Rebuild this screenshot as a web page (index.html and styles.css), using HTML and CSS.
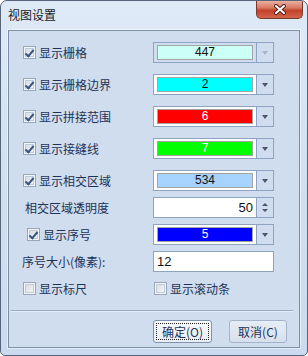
FILE: index.html
```html
<!DOCTYPE html>
<html lang="zh-CN">
<head>
  <meta charset="UTF-8">
  <title>视图设置</title>
  <link rel="stylesheet" href="styles.css">
</head>
<body>
  <div class="window">
    <div class="titlebar">
      <span class="title">视图设置</span>
      <div class="close">
        <svg width="14" height="11" viewBox="0 0 14 11">
          <path d="M3 2 L11 9 M11 2 L3 9" stroke="#5b231b" stroke-width="4" stroke-linecap="round"/>
          <path d="M3 2 L11 9 M11 2 L3 9" stroke="#fff" stroke-width="2" stroke-linecap="round"/>
        </svg>
      </div>
    </div>

    <div class="client">
      <div class="row">
        <label class="label"><span class="check on"></span>显示栅格</label>
        <div class="combo disabled">
          <div class="combo-val"><div class="swatch dark" style="background:#ccfff5">447</div></div>
          <div class="combo-btn"><span class="arrow"></span></div>
        </div>
      </div>
      <div class="row">
        <label class="label"><span class="check on"></span>显示栅格边界</label>
        <div class="combo">
          <div class="combo-val"><div class="swatch dark" style="background:#00ffff">2</div></div>
          <div class="combo-btn"><span class="arrow"></span></div>
        </div>
      </div>
      <div class="row">
        <label class="label"><span class="check on"></span>显示拼接范围</label>
        <div class="combo">
          <div class="combo-val"><div class="swatch" style="background:#ff0000">6</div></div>
          <div class="combo-btn"><span class="arrow"></span></div>
        </div>
      </div>
      <div class="row">
        <label class="label"><span class="check on"></span>显示接缝线</label>
        <div class="combo">
          <div class="combo-val"><div class="swatch" style="background:#00ff00">7</div></div>
          <div class="combo-btn"><span class="arrow"></span></div>
        </div>
      </div>
      <div class="row tight">
        <label class="label"><span class="check on"></span>显示相交区域</label>
        <div class="combo">
          <div class="combo-val"><div class="swatch dark" style="background:#a6d3ff">534</div></div>
          <div class="combo-btn"><span class="arrow"></span></div>
        </div>
      </div>
      <div class="row tight">
        <label class="label text-only">相交区域透明度</label>
        <div class="combo spin">
          <div class="spin-val">50</div>
          <div class="combo-btn spin-btn"><span class="arrow up"></span><span class="arrow"></span></div>
        </div>
      </div>
      <div class="row tight">
        <label class="label indent"><span class="check on"></span>显示序号</label>
        <div class="combo">
          <div class="combo-val"><div class="swatch" style="background:#0000ff">5</div></div>
          <div class="combo-btn"><span class="arrow"></span></div>
        </div>
      </div>
      <div class="row tight">
        <label class="label size-label">序号大小(像素):</label>
        <div class="textbox">12</div>
      </div>
      <div class="row">
        <label class="label wide"><span class="check"></span>显示标尺</label>
        <label class="label plain"><span class="check"></span>显示滚动条</label>
      </div>

      <div class="sep"></div>

      <div class="actions">
        <button class="btn default"><span class="focus">确定(O)</span></button>
        <button class="btn">取消(C)</button>
      </div>
    </div>
  </div>
</body>
</html>
```

FILE: styles.css
```css
body {
  margin: 0;
  font-family: "Noto Sans CJK SC", sans-serif;
  background: #fff;
}
.window {
  width: 308px;
  height: 356px;
  box-sizing: border-box;
  border: 1px solid #56657a;
  border-radius: 7px 7px 5px 5px;
  background: linear-gradient(#dfeaf7, #d3e1f1 40%, #cbdaee);
  overflow: hidden;
}
.titlebar {
  height: 29px;
  display: flex;
  justify-content: space-between;
  align-items: flex-start;
  padding-left: 7px;
}
.title {
  font-size: 12px;
  line-height: 14px;
  margin-top: 7px;
  color: #1a1a1a;
}
.close {
  width: 47px;
  height: 18px;
  margin-right: 4px;
  box-sizing: border-box;
  border: 1px solid #7a3a2e;
  border-top: none;
  border-radius: 0 0 5px 5px;
  background: linear-gradient(#eab0a2, #d77a63 40%, #c2412a 55%, #d2654b);
  display: flex;
  align-items: center;
  justify-content: center;
}
.client {
  margin: 0 7px;
  height: 318px;
  box-sizing: border-box;
  border: 1px solid #7d8ea7;
  background: #d0ddee;
  padding-top: 11px;
  box-shadow: 0 0 0 1px rgba(255, 255, 255, 0.5);
}
.row {
  display: flex;
  align-items: center;
  height: 21px;
  margin-bottom: 11px;
}
.row.tight {
  margin-bottom: 6px;
}
.label {
  width: 144px;
  box-sizing: border-box;
  padding-left: 14px;
  display: flex;
  align-items: center;
  gap: 3px;
  font-size: 12px;
  color: #1e3356;
  white-space: nowrap;
}
.label.text-only {
  padding-left: 16px;
}
.label.indent {
  padding-left: 18px;
}
.label.size-label {
  padding-left: 13px;
}
.label.wide {
  width: 145px;
}
.label.plain {
  padding-left: 0;
}
.check {
  width: 13px;
  height: 13px;
  box-sizing: border-box;
  border: 1px solid #97a6bb;
  background: #f3f5f8;
  position: relative;
  flex: none;
}
.check::before {
  content: "";
  position: absolute;
  left: 1px;
  top: 1px;
  width: 9px;
  height: 9px;
  box-sizing: border-box;
  border: 1px solid #c2ccd9;
  background: linear-gradient(135deg, #d9dee5, #f3f4f6);
}
.check.on::after {
  content: "";
  position: absolute;
  left: 3px;
  top: 1px;
  width: 3px;
  height: 7px;
  border: solid #34548a;
  border-width: 0 2px 2px 0;
  transform: rotate(40deg);
}
.combo {
  width: 121px;
  height: 21px;
  box-sizing: border-box;
  border: 1px solid #8ea3c1;
  background: #fff;
  display: flex;
}
.combo.disabled {
  background: #d0ddee;
}
.combo-val {
  flex: 1;
  padding: 2px 3px;
}
.swatch {
  height: 13px;
  border: 1px solid #a4a4a4;
  font-family: "Liberation Sans", sans-serif;
  font-size: 12px;
  line-height: 13px;
  text-align: center;
  color: #fff;
}
.swatch.dark {
  color: #111;
}
.combo-btn {
  width: 16px;
  border-left: 1px solid #8ea3c1;
  background: #d0ddee;
  display: flex;
  flex-direction: column;
  align-items: center;
  justify-content: center;
}
.arrow {
  width: 0;
  height: 0;
  border-left: 3.5px solid transparent;
  border-right: 3.5px solid transparent;
  border-top: 4px solid #4d5866;
}
.combo.disabled .arrow {
  border-top-color: #aab6c6;
}
.spin-btn {
  gap: 3px;
}
.spin-btn .arrow {
  border-left-width: 3px;
  border-right-width: 3px;
  border-top-width: 3px;
}
.spin-btn .arrow.up {
  border-top: none;
  border-bottom: 3px solid #4d5866;
}
.spin-val {
  flex: 1;
  text-align: right;
  padding-right: 3px;
  font-family: "Liberation Sans", sans-serif;
  font-size: 13px;
  line-height: 19px;
  color: #111;
}
.textbox {
  width: 121px;
  height: 21px;
  box-sizing: border-box;
  border: 1px solid #8ea3c1;
  background: #fff;
  padding-left: 3px;
  font-family: "Liberation Sans", sans-serif;
  font-size: 13px;
  line-height: 19px;
  color: #111;
}
.sep {
  margin: 4px 6px 0 2px;
  border-top: 1px solid #9aaac2;
  border-bottom: 1px solid #e4ecf6;
}
.actions {
  display: flex;
  gap: 17px;
  padding-left: 144px;
  margin-top: 8px;
}
.btn {
  width: 58px;
  height: 23px;
  box-sizing: border-box;
  border: 1px solid #a3b4cb;
  border-radius: 3px;
  background: linear-gradient(#e6edf6, #d6e0ed);
  font-family: "Noto Sans CJK SC", sans-serif;
  font-size: 12px;
  color: #1e3356;
  padding: 0;
  display: flex;
  align-items: center;
  justify-content: center;
}
.btn.default {
  width: 59px;
  border-color: #7f93b1;
  background: linear-gradient(#f7f9fc, #e8eef6);
  padding: 2px;
}
.focus {
  flex: 1;
  align-self: stretch;
  border: 1px dotted #222;
  display: flex;
  align-items: center;
  justify-content: center;
}
```
